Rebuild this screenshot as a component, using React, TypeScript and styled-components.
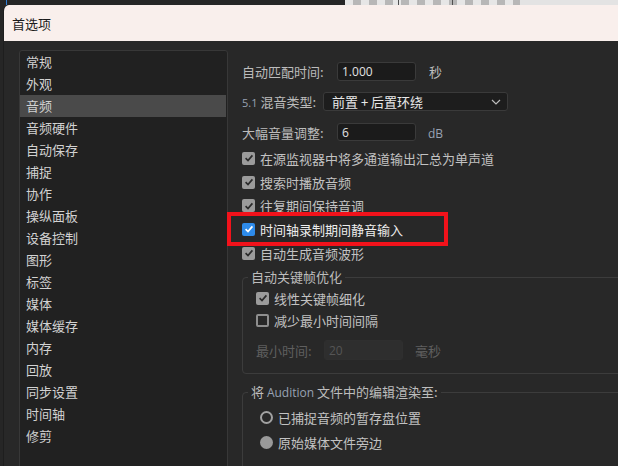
import React from "react";
import styled, { createGlobalStyle } from "styled-components";

const GlobalStyle = createGlobalStyle`
  html, body { margin: 0; padding: 0; background: #262626; overflow: hidden; }
  body { font-family: "Noto Sans CJK SC", "Noto Sans", sans-serif; }
`;

const Screen = styled.div`
  width: 618px;
  height: 466px;
  display: flex;
  flex-direction: column;
  overflow: hidden;
  background: #262626;
`;

const TopStrip = styled.div`
  height: 5px;
  display: flex;
  flex-shrink: 0;
`;

const StripDark = styled.div`
  width: 345px;
  background: linear-gradient(to right, #262626 6px, #2f7fd6 6px, #2f7fd6 7px, #262626 7px);
`;

const StripChecker = styled.div`
  width: 175px;
  background:
    linear-gradient(to right, transparent 53px, #505050 53px, #505050 54px, transparent 54px, transparent 107px, #505050 107px, #505050 108px, transparent 108px),
    repeating-linear-gradient(to right, #e6e6e6 0 8px, #b7b7b7 8px 16px);
`;

const StripLight = styled.div`
  flex: 1;
  background: #e3e3e3;
`;

const Window = styled.div`
  flex: 1;
  margin-left: 3px;
  display: flex;
  flex-direction: column;
  border-top-left-radius: 6px;
  overflow: hidden;
  background: #282828;
  border-left: 1px solid #1e1e1e;
  min-height: 0;
`;

const TitleBar = styled.div`
  height: 36px;
  flex-shrink: 0;
  background: #f9efec;
  display: flex;
  align-items: center;
  padding-left: 8px;
  font-size: 13px;
  color: #1b1b1b;
`;

const Body = styled.div`
  flex: 1;
  display: flex;
  gap: 14px;
  padding-left: 15px;
  overflow: hidden;
  min-height: 0;
`;

const Sidebar = styled.div`
  width: 209px;
  box-sizing: border-box;
  flex-shrink: 0;
  margin-top: 9px;
  margin-bottom: -10px;
  border: 1px solid #383838;
  border-radius: 3px;
  background: #212121;
`;

const NavItem = styled.div<{ $active?: boolean }>`
  height: 22px;
  line-height: 22px;
  padding-left: 6px;
  margin-right: 1px;
  font-size: 13px;
  color: #d2d2d2;
  background: ${(p) => (p.$active ? "#4a4a4a" : "transparent")};
`;

const Content = styled.div`
  flex: 1;
  min-width: 0;
  display: flex;
  flex-direction: column;
  padding-top: 21px;

  & > * {
    flex-shrink: 0;
  }
`;

const FormRow = styled.div<{ $mt?: number; $h?: number }>`
  display: flex;
  align-items: center;
  flex-shrink: 0;
  height: ${(p) => p.$h ?? 19}px;
  margin-top: ${(p) => p.$mt ?? 0}px;
  font-size: 13px;
  color: #bcbcbc;
`;

const Label = styled.span<{ $w: number; $dim?: boolean }>`
  width: ${(p) => p.$w}px;
  flex-shrink: 0;
  white-space: nowrap;
  color: ${(p) => (p.$dim ? "#5f5f5f" : "#bcbcbc")};
`;

const Latin = styled.span<{ $size?: number }>`
  font-family: "Open Sans", "Noto Sans", sans-serif;
  font-size: ${(p) => p.$size ?? 12}px;
  color: #98a2b3;
`;

const TextInput = styled.div<{ $disabled?: boolean }>`
  width: 79px;
  height: 100%;
  box-sizing: border-box;
  display: flex;
  align-items: center;
  padding-left: 4px;
  border: 1px solid ${(p) => (p.$disabled ? "#2f2f2f" : "#3a3a3a")};
  border-radius: 3px;
  background: ${(p) => (p.$disabled ? "#2e2e2e" : "#1b1b1b")};
  font-family: "Open Sans", "Noto Sans", sans-serif;
  font-size: 12px;
  color: ${(p) => (p.$disabled ? "#555" : "#e2e2e2")};
`;

const Unit = styled.span<{ $gap: number; $dim?: boolean }>`
  margin-left: ${(p) => p.$gap}px;
  color: ${(p) => (p.$dim ? "#5f5f5f" : "#bcbcbc")};
`;

const Select = styled.div`
  width: 185px;
  height: 100%;
  box-sizing: border-box;
  display: flex;
  align-items: center;
  justify-content: space-between;
  padding: 0 6px 0 8px;
  border: 1px solid #3a3a3a;
  border-radius: 3px;
  background: #1d1d1d;
  color: #e8e8e8;
  font-size: 13px;
`;

const CheckRow = styled.div<{ $h?: number; $mt?: number; $highlight?: boolean }>`
  position: relative;
  display: flex;
  align-items: center;
  flex-shrink: 0;
  gap: 5px;
  height: ${(p) => p.$h ?? 24}px;
  margin-top: ${(p) => p.$mt ?? 0}px;
  font-size: 13px;
  white-space: nowrap;
  color: ${(p) => (p.$highlight ? "#ededed" : "#c2c2c2")};

  ${(p) =>
    p.$highlight &&
    `
    &::after {
      content: "";
      position: absolute;
      left: -15px;
      top: -5px;
      width: 221px;
      height: 34px;
      box-sizing: border-box;
      border: 4px solid #f2121b;
      pointer-events: none;
    }
  `}
`;

type BoxState = "on" | "accent" | "off";

const Box = styled.span<{ $state: BoxState }>`
  width: 13px;
  height: 13px;
  box-sizing: border-box;
  flex-shrink: 0;
  border-radius: 2px;
  display: inline-flex;
  align-items: center;
  justify-content: center;
  background: ${(p) => (p.$state === "accent" ? "#2e8bea" : p.$state === "on" ? "#9b9b9b" : "transparent")};
  border: ${(p) => (p.$state === "off" ? "2px solid #8e8e8e" : "none")};
`;

const RadioDot = styled.span<{ $filled?: boolean }>`
  width: 13px;
  height: 13px;
  box-sizing: border-box;
  flex-shrink: 0;
  border-radius: 50%;
  background: ${(p) => (p.$filled ? "#9a9a9a" : "transparent")};
  border: ${(p) => (p.$filled ? "none" : "2px solid #a2a2a2")};
`;

const Group = styled.fieldset<{ $mt: number; $pb: number }>`
  margin: ${(p) => p.$mt}px 0 0 0;
  padding: 0 0 ${(p) => p.$pb}px 0;
  border: 1px solid #3c3c3c;
  border-radius: 4px;
  width: 420px;
  min-width: 0;
  box-sizing: border-box;
  flex-shrink: 0;
`;

const Legend = styled.legend`
  margin-left: 5px;
  padding: 0 3px;
  font-size: 13px;
  line-height: 18px;
  color: #bdbdbd;
  white-space: nowrap;
`;

const GroupBody = styled.div<{ $pl: number; $mt: number }>`
  display: flex;
  flex-direction: column;
  padding-left: ${(p) => p.$pl}px;
  margin-top: ${(p) => p.$mt}px;
`;

const Check = ({ dark }: { dark?: boolean }) => (
  <svg width="10" height="10" viewBox="0 0 10 10">
    <path d="M1.6 5.2 L4 7.5 L8.4 2.4" fill="none" stroke={dark ? "#2b2b2b" : "#ffffff"} strokeWidth="1.7" />
  </svg>
);

const Chevron = () => (
  <svg width="10" height="6" viewBox="0 0 10 6">
    <path d="M1 1 L5 5 L9 1" fill="none" stroke="#bbbbbb" strokeWidth="1.2" />
  </svg>
);

const CheckItem = ({ state, text, ...rest }: { state: BoxState; text: string; $h?: number; $mt?: number; $highlight?: boolean }) => (
  <CheckRow {...rest}>
    <Box $state={state}>{state !== "off" && <Check dark={state === "on"} />}</Box>
    <span>{text}</span>
  </CheckRow>
);

const navItems = [
  "常规", "外观", "音频", "音频硬件", "自动保存", "捕捉", "协作", "操纵面板", "设备控制",
  "图形", "标签", "媒体", "媒体缓存", "内存", "回放", "同步设置", "时间轴", "修剪",
];

export default function App() {
  return (
    <>
      <GlobalStyle />
      <Screen>
        <TopStrip>
          <StripDark />
          <StripChecker />
          <StripLight />
        </TopStrip>
        <Window>
          <TitleBar>首选项</TitleBar>
          <Body>
            <Sidebar>
              {navItems.map((n) => (
                <NavItem key={n} $active={n === "音频"}>{n}</NavItem>
              ))}
            </Sidebar>
            <Content>
              <FormRow>
                <Label $w={95}>自动匹配时间:</Label>
                <TextInput>1.000</TextInput>
                <Unit $gap={13}>秒</Unit>
              </FormRow>
              <FormRow $mt={11}>
                <Label $w={81}>
                  <Latin $size={11}>5.1</Latin> 混音类型:
                </Label>
                <Select>
                  <span>前置 + 后置环绕</span>
                  <Chevron />
                </Select>
              </FormRow>
              <FormRow $mt={12} $h={18}>
                <Label $w={95}>大幅音量调整:</Label>
                <TextInput>6</TextInput>
                <Unit $gap={12}>
                  <Latin $size={12}>dB</Latin>
                </Unit>
              </FormRow>
              <CheckItem $mt={5} state="on" text="在源监视器中将多通道输出汇总为单声道" />
              <CheckItem state="on" text="搜索时播放音频" />
              <CheckItem $h={23} state="on" text="往复期间保持音调" />
              <CheckItem state="accent" $highlight text="时间轴录制期间静音输入" />
              <CheckItem state="on" text="自动生成音频波形" />

              <Group $mt={3} $pb={13}>
                <Legend>自动关键帧优化</Legend>
                <GroupBody $pl={13} $mt={1}>
                  <CheckItem $h={22} state="on" text="线性关键帧细化" />
                  <CheckItem $h={22} state="off" text="减少最小时间间隔" />
                  <FormRow $mt={9} $h={20}>
                    <Label $w={68} $dim>最小时间:</Label>
                    <TextInput $disabled>20</TextInput>
                    <Unit $gap={12} $dim>毫秒</Unit>
                  </FormRow>
                </GroupBody>
              </Group>

              <Group $mt={9} $pb={20}>
                <Legend>
                  将 <Latin $size={12}>Audition</Latin> 文件中的编辑渲染至:
                </Legend>
                <GroupBody $pl={17} $mt={3}>
                  <CheckRow $h={25}>
                    <RadioDot />
                    <span>已捕捉音频的暂存盘位置</span>
                  </CheckRow>
                  <CheckRow $h={25}>
                    <RadioDot $filled />
                    <span>原始媒体文件旁边</span>
                  </CheckRow>
                </GroupBody>
              </Group>
            </Content>
          </Body>
        </Window>
      </Screen>
    </>
  );
}
